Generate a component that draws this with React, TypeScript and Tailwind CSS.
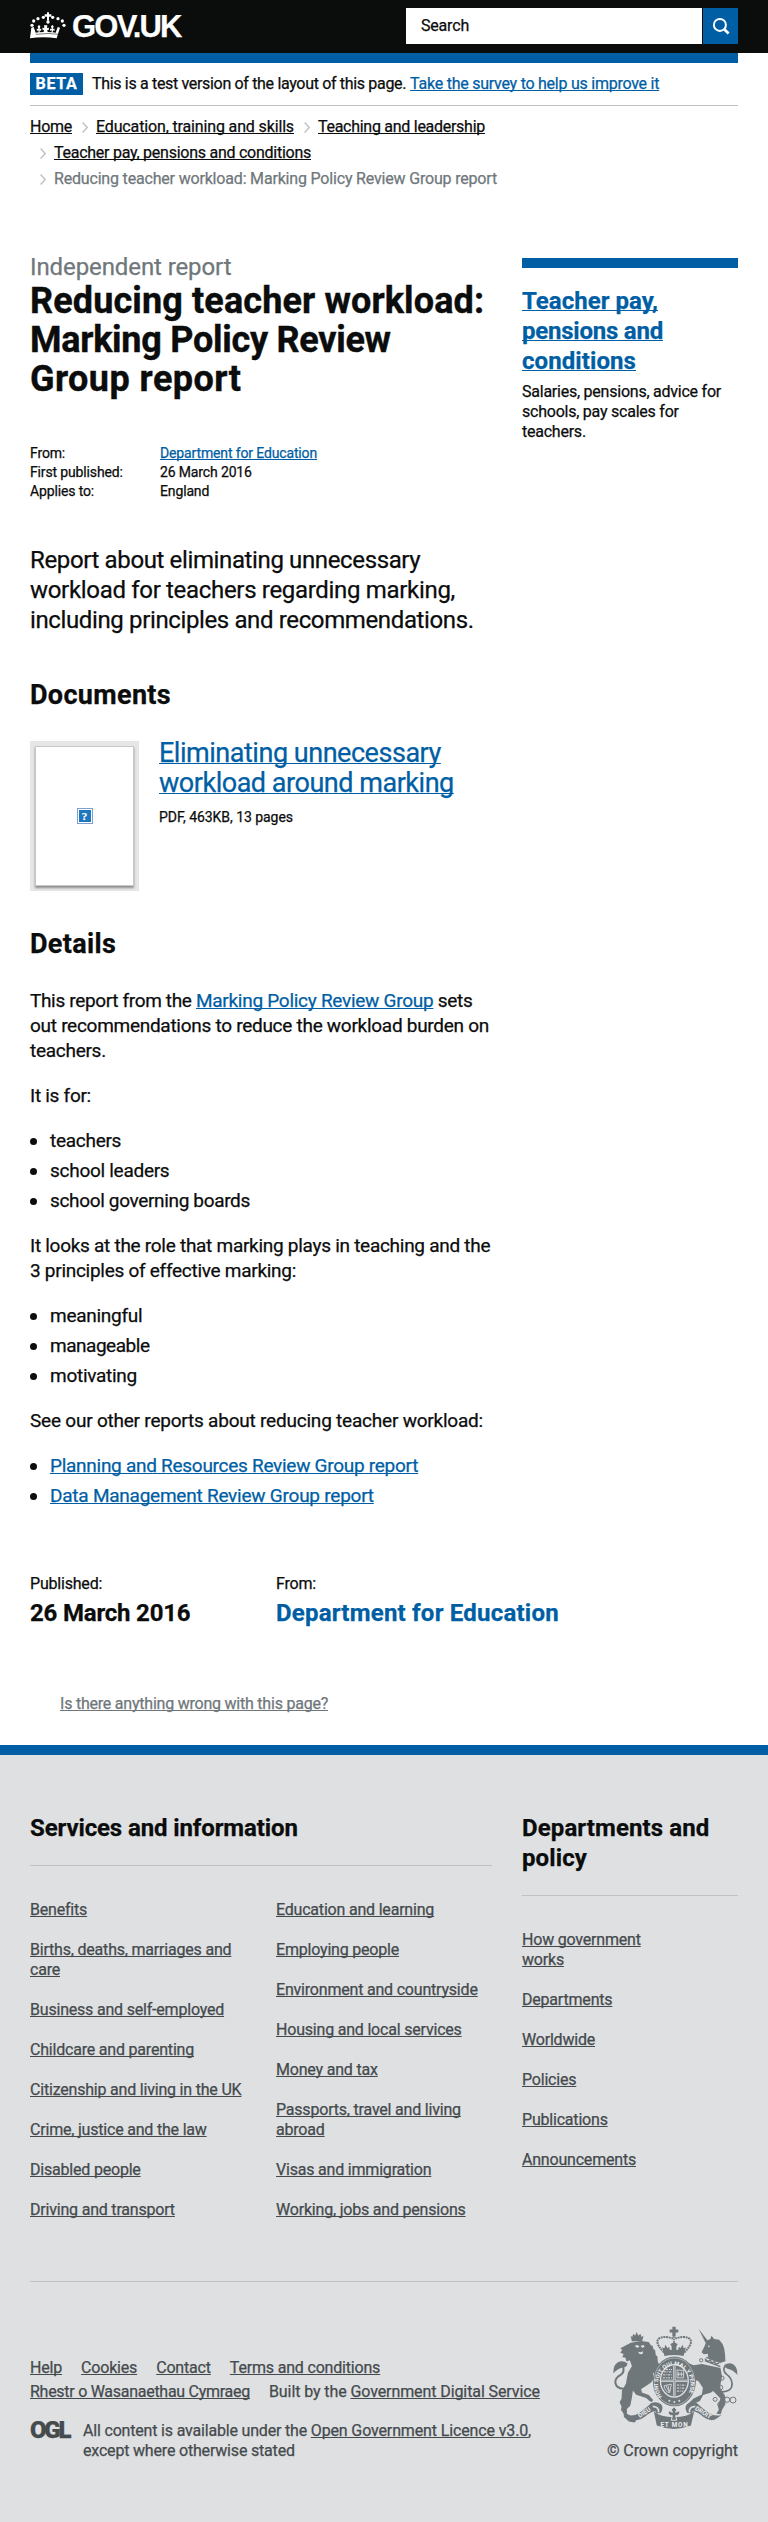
import React from "react";

type Item = { text: string; cls?: string };

const link =
  "underline decoration-1 underline-offset-[1px] [text-decoration-skip-ink:none]";

const services: Item[][] = [
  [
    { text: "Benefits" },
    { text: "Births, deaths, marriages and care" },
    { text: "Business and self-employed" },
    { text: "Childcare and parenting" },
    { text: "Citizenship and living in the UK" },
    { text: "Crime, justice and the law" },
    { text: "Disabled people" },
    { text: "Driving and transport" },
  ],
  [
    { text: "Education and learning" },
    { text: "Employing people" },
    { text: "Environment and countryside" },
    { text: "Housing and local services" },
    { text: "Money and tax" },
    { text: "Passports, travel and living abroad" },
    { text: "Visas and immigration" },
    { text: "Working, jobs and pensions" },
  ],
];

const departments: Item[] = [
  { text: "How government works" },
  { text: "Departments" },
  { text: "Worldwide" },
  { text: "Policies" },
  { text: "Publications" },
  { text: "Announcements" },
];

function Crown() {
  const dots = [
    [130, 52], [114, 56], [101, 63], [96, 76], [158, 52], [174, 56], [187, 63], [192, 76],
  ];
  return (
    <svg width="36" height="27" viewBox="90 36 108 81" fill="#fff" aria-hidden="true">
      <path d="M141 37h6v6h7v7h-7v12h-6V50h-7v-7h7z" />
      <circle cx="144" cy="66" r="5" />
      {dots.map(([x, y]) => (
        <circle key={`${x}-${y}`} cx={x} cy={y} r="4.9" />
      ))}
      <path d="M94 83l7-2 6 17 9-1-1-6-4 2-1-7 5 1-2-8 4-4 4 4-2 8 5-1-1 7-4-2 0 6 12-1 1-7-4 2-1-8 6 1-1-8h10l-1 8 6-1-1 8-4-2 1 7 12 1 0-6-4 2-1-7 5 1-2-8 4-4 4 4-2 8 5-1-1 7-4-2-1 6 9 1 6-17 7 2-10 32q-40-6-80 0z" />
      <path d="M107 103q37-5 74 0" fill="none" stroke="#0b0c0c" strokeWidth="1.6" />
    </svg>
  );
}

function Chevron() {
  return (
    <svg className="mr-2 ml-[10px] mt-px shrink-0" width="6" height="11" viewBox="0 0 6 11" fill="none" aria-hidden="true">
      <path d="M.6.6L5.2 5.5.6 10.4" stroke="#bfc1c3" strokeWidth="1.4" />
    </svg>
  );
}

function Crest() {
  return (
    <svg className="[-webkit-text-stroke:0px]" width="125" height="103" viewBox="68 48 377 310" fill="#6f777b" aria-hidden="true">
      {/* lion */}
      <path d="M121 77l5 4 3-9 6 4 4-10 5 10 7-4 3 9 6-4-4 17h-31z" />
      <path d="M122 98l30-5 24 3 7 11 4-1 3 12 5 2 2 15 5 5 1 15 4 9-2 13 5 16 1 24-8-3-6-18-9-8 3 18-8 12-18 12-12 8 2 10 21 8 13 15-4 6-7-3-10-9-30-10-10-13-3 22-5 24-10 10 0 14 18 10 10 12-6 5-16-3-15-14-1-10-8-12 2-9-6-13 6-12 1-24 12-20 6-33 12-20-6-18-10 4-4-12-9-1 4-10-10-4 6-9-6-4z" />
      <path d="M133 108l8-3 7 4-6 5zM151 108l8-3 5 4-7 5zM143 125l8 2 8-3-2 8-8 1z" fill="#dee0e2" />
      <path d="M108 236q-29 4-33-17-1-15 16-24 13-8 7-26" fill="none" stroke="#6f777b" strokeWidth="6" />
      <path d="M69 190q-1-25 14-33 14-7 29 4-3 12-13 12-15 2-30 17z" />
      {/* unicorn */}
      <path d="M326 56l28 36-7 6z" />
      <path d="M350 93l12-7 3-9 8 10 15 2 10 12 5 13 3 20 1 20-12 4-20-5-20-10-1-12-12 2-7-6 9-18z" />
      <circle cx="357" cy="109" r="2.5" fill="#dee0e2" />
      <path d="M349 142l44 16M345 152l47 18" stroke="#6f777b" strokeWidth="4" />
      <path d="M345 146l9 9 7-5 5 9 8-4 5 8 9-3" fill="none" stroke="#6f777b" strokeWidth="4" />
      <path d="M336 162l56 12 5 26-5 24 0 12 14 22 1 26-10 16-4 14-13-2 7-12-3-12 8-22-22-22-6 4-24 8-10 18-20 9-8 6-9-5 18-18 25-12 3-20-13-20-15-6-8 10-7-12 9-16-7-14-13 5-3-8 13-14 16 7z" />
      <circle cx="334" cy="151" r="5" fill="none" stroke="#6f777b" strokeWidth="3" />
      <path d="M395 246q34 0 32-26-2-16-17-27-13-12-4-25" fill="none" stroke="#6f777b" strokeWidth="5" />
      <path d="M443 195q1-25-14-33-12-5-26 3 3 10 13 12 15 3 27 18z" />
      <g fill="none" stroke="#6f777b" strokeWidth="3">
        <circle cx="397" cy="205" r="6" />
        <circle cx="392" cy="233" r="7" />
        <circle cx="376" cy="269" r="6" />
        <circle cx="391" cy="284" r="7" />
        <circle cx="412" cy="270" r="8" />
        <circle cx="430" cy="271" r="9" />
      </g>
      {/* central crown */}
      <path d="M247 50h10v8h8v9h-8v12h-10V67h-8v-9h8z" />
      <path d="M222 128c-12-15-24-26-19-38 8-15 39-8 46-4M283 128c12-15 24-26 19-38-8-15-39-8-46-4" fill="none" stroke="#6f777b" strokeWidth="6" strokeDasharray="6 2" />
      <path d="M252 79v46" stroke="#6f777b" strokeWidth="5" strokeDasharray="5 2" />
      <path d="M220 124l-4-12 7 3 3-11 6 10 6-3 1 8 6 1 0-10-4-8 11-5 11 5-4 8 0 10 6-1 1-8 6 3 6-10 3 11 7-3-4 12-3 14q-29-6-58 0z" />
      {/* garter and shield */}
      <ellipse cx="253" cy="215" rx="65" ry="75" />
      <ellipse cx="253" cy="215" rx="61" ry="71" fill="none" stroke="#dee0e2" strokeWidth="1.5" />
      <ellipse cx="253" cy="213" rx="44" ry="51" fill="#dee0e2" />
      <ellipse cx="253" cy="213" rx="40" ry="47" />
      <path id="garter" d="M216 261A49 57 0 1 1 290 261" fill="none" />
      <text fill="#eef0f1" fontSize="17" fontWeight="700" fontFamily="Roboto, sans-serif">
        <textPath href="#garter" textLength="232">HONI SOIT QUI MAL Y PENSE</textPath>
      </text>
      <path d="M253 166v94M213 213h80" stroke="#dee0e2" strokeWidth="7" />
      <path d="M253 166v94M213 213h80" stroke="#6f777b" strokeWidth="2" />
      <g fill="none" stroke="#dee0e2" strokeWidth="3" strokeDasharray="7 3 3 2">
        <path d="M222 186h24M219 195h27M218 204h28M227 179h19" />
        <path d="M261 226h26M261 235h24M261 244h19" />
      </g>
      <path d="M261 180l20 2v22h-20zM266 186v14M274 186v14M261 193h20" fill="none" stroke="#dee0e2" strokeWidth="2.5" />
      <path d="M222 228l22-5-5 26q-15-3-17-21zM228 228l9 18M234 227l4 18" fill="none" stroke="#dee0e2" strokeWidth="2.5" />
      <g fill="#dee0e2">
        <circle cx="238" cy="273" r="3" />
        <circle cx="253" cy="277" r="3" />
        <circle cx="268" cy="273" r="3" />
      </g>
      {/* motto ribbons */}
      <path d="M108 315q20 8 40-6 25-18 35-29 18-6 30 4 10 12-2 27-8-2-10 2l-6-9q-15 3-32 18-22 17-41 4z" />
      <path d="M396 315q-20 8-40-6-25-18-35-29-18-6-30 4-10 12 2 27 8-2 10 2l6-9q15 3 32 18 22 17 41 4z" />
      <path d="M191 305q20 18 61 18t61-18l-10 43q-51 20-103 0z" />
      <path d="M188 290q20 2 17 18M316 290q-20 2-17 18" fill="none" stroke="#dee0e2" strokeWidth="5" />
      <path d="M252 291l8 9-3 8 10-5 3 8-8 7h-5l3 14h-16l3-14h-5l-8-7 3-8 10 5-3-8z" stroke="#dee0e2" strokeWidth="3" />
      <g fill="#eef0f1" fontSize="19" fontWeight="700" fontFamily="Roboto, sans-serif" textAnchor="middle">
        <text transform="translate(166 314) rotate(-33)">DIEU</text>
        <text x="252" y="351" textLength="82">ET MON</text>
        <text transform="translate(337 314) rotate(33)">DROIT</text>
      </g>
    </svg>
  );
}

function Bullets({ children }: { children: React.ReactNode }) {
  return <ul className="mt-5 flex flex-col gap-[5px]">{children}</ul>;
}

function Bullet({ children }: { children: React.ReactNode }) {
  return (
    <li className="flex items-center">
      <span className="mt-px mr-[13px] h-[7px] w-[7px] rounded-full bg-[#0b0c0c]" />
      {children}
    </li>
  );
}

function FooterLinks({ items, width }: { items: Item[]; width: string }) {
  return (
    <ul className={`flex flex-col gap-5 text-base leading-5 tracking-[-0.0125em] text-[#454a4d] ${width}`}>
      {items.map((i) => (
        <li key={i.text}>
          <a className={link}>{i.text}</a>
        </li>
      ))}
    </ul>
  );
}

export default function App() {
  return (
    <div className="w-[768px] bg-white font-['Roboto',sans-serif] text-[#0b0c0c] [-webkit-text-stroke:0.25px]">
      <header className="flex h-[53px] items-start justify-between bg-[#0b0c0c] px-[30px]">
        <a className="flex pt-3">
          <Crown />
          <span className="ml-[6px] font-['Liberation_Sans',sans-serif] text-[31px] leading-[29px] font-bold tracking-[-1.8px] text-white">
            GOV.UK
          </span>
        </a>
        <div className="mt-2 flex h-9 gap-px">
          <div className="flex w-[296px] items-center bg-white pl-[15px] text-base tracking-[-0.012em]">Search</div>
          <button className="flex w-[35px] items-center justify-center bg-[#005ea5]" aria-label="Search">
            <svg width="18" height="18" viewBox="0 0 18 18" fill="none" stroke="#fff">
              <circle cx="7.9" cy="7.9" r="6" strokeWidth="2" />
              <path d="M12.2 12.2l4.4 4.2" strokeWidth="2.8" />
            </svg>
          </button>
        </div>
      </header>

      <div className="mx-[30px]">
        <div className="h-[10px] bg-[#005ea5]" />
        <div className="flex h-[43px] items-center border-b border-[#bfc1c3] text-base leading-5">
          <strong className="mr-[9px] flex h-[22px] w-[53px] items-center justify-center bg-[#005ea5] pb-px tracking-[0.04em] text-white">
            BETA
          </strong>
          <span className="tracking-[-0.0205em]">This is a test version of the layout of this page.</span>
          <a className={`ml-1 tracking-[-0.0155em] text-[#005ea5] ${link}`}>Take the survey to help us improve it</a>
        </div>
        <nav className="flex h-[86px] flex-col pt-2 text-base leading-[26px]">
          <div className="flex items-center">
            <a className={`tracking-[-0.0165em] ${link}`}>Home</a>
            <Chevron />
            <a className={`tracking-[-0.0091em] ${link}`}>Education, training and skills</a>
            <Chevron />
            <a className={`tracking-[-0.0172em] ${link}`}>Teaching and leadership</a>
          </div>
          <div className="flex items-center">
            <Chevron />
            <a className={`tracking-[-0.016em] ${link}`}>Teacher pay, pensions and conditions</a>
          </div>
          <div className="flex items-center text-[#6f777b]">
            <Chevron />
            <span className="tracking-[-0.0113em]">Reducing teacher workload: Marking Policy Review Group report</span>
          </div>
        </nav>

        <div className="flex justify-between">
          <main className="w-[462px] pt-[60px]">
            <p className="text-2xl leading-[30px] tracking-[-0.004em] text-[#6f777b]">Independent report</p>
            <h1 className="text-[36px] leading-[39px] font-bold [-webkit-text-stroke:0.4px]">
              <span className="tracking-[0.0035em]">Reducing teacher workload:</span>
              <br />
              <span className="tracking-[-0.0076em]">Marking Policy Review</span>
              <br />
              <span className="tracking-[0.0127em]">Group report</span>
            </h1>
            <dl className="mt-[45px] grid grid-cols-[130px_1fr] text-sm leading-[19px] tracking-[-0.01em]">
              <dt>From:</dt>
              <dd><a className={`text-[#005ea5] ${link}`}>Department for Education</a></dd>
              <dt>First published:</dt>
              <dd>26 March 2016</dd>
              <dt>Applies to:</dt>
              <dd>England</dd>
            </dl>
            <p className="mt-[44px] text-2xl leading-[30px] tracking-[-0.0155em]">
              Report about eliminating unnecessary
              <br />
              <span className="tracking-[-0.0132em]">workload for teachers regarding marking,</span>
              <br />
              including principles and recommendations.
            </p>
            <h2 className="mt-[45px] text-[27px] leading-[30px] font-bold tracking-[0.012em]">Documents</h2>
            <section className="mt-7 flex h-[153px]">
              <div className="mt-2 ml-[5px] flex h-[140px] w-[99px] items-center justify-center border border-[#c6c7c7] bg-white shadow-[0_2px_2px_rgba(11,12,12,0.4)] outline-[5px] outline-[rgba(11,12,12,0.1)]">
                <div className="flex h-4 w-4 border border-[#7f9fd0] bg-white p-px">
                  <div className="flex flex-1 items-center justify-center bg-[#1f78bd] font-['Liberation_Serif',serif] text-[11px] leading-none font-bold text-white">
                    ?
                  </div>
                </div>
              </div>
              <div className="ml-[25px] pt-px">
                <h3 className="text-[27px] leading-[29.5px] tracking-[-0.0175em] text-[#005ea5]">
                  <a className={link}>
                    Eliminating unnecessary
                    <br />
                    workload around marking
                  </a>
                </h3>
                <p className="mt-[9px] text-sm leading-5 tracking-[-0.0033em]">PDF, 463KB, 13 pages</p>
              </div>
            </section>
            <h2 className="mt-[38px] text-[27px] leading-[30px] font-bold tracking-[0.012em]">Details</h2>
            <div className="mt-[29px] text-[19px] leading-[25px] tracking-[-0.0146em]">
              <p>
                <span className="tracking-[-0.018em]">This report from the </span>
                <a className={`text-[#005ea5] ${link}`}>Marking Policy Review Group</a> sets
                <br />
                out recommendations to reduce the workload burden on
                <br />
                teachers.
              </p>
              <p className="mt-5">It is for:</p>
              <Bullets>
                <Bullet>teachers</Bullet>
                <Bullet>school leaders</Bullet>
                <Bullet><span className="tracking-[-0.018em]">school governing boards</span></Bullet>
              </Bullets>
              <p className="mt-5">
                It looks at the role that marking plays in teaching and the
                <br />3 principles of effective marking:
              </p>
              <Bullets>
                <Bullet>meaningful</Bullet>
                <Bullet><span className="tracking-[-0.025em]">manageable</span></Bullet>
                <Bullet>motivating</Bullet>
              </Bullets>
              <p className="mt-5 tracking-[-0.0113em]">See our other reports about reducing teacher workload:</p>
              <Bullets>
                <Bullet><a className={`text-[#005ea5] ${link}`}>Planning and Resources Review Group report</a></Bullet>
                <Bullet><a className={`tracking-[-0.0125em] text-[#005ea5] ${link}`}>Data Management Review Group report</a></Bullet>
              </Bullets>
            </div>
          </main>

          <aside className="w-[216px] pt-[66px]">
            <div className="border-t-[10px] border-[#005ea5] pt-[18px]">
              <h2 className="text-2xl leading-[30px] font-bold text-[#005ea5]">
                <a className={link}>
                  <span className="tracking-[0.0011em]">Teacher pay,</span>
                  <br />
                  <span className="tracking-[-0.0094em]">pensions and</span>
                  <br />
                  <span className="tracking-[0.0035em]">conditions</span>
                </a>
              </h2>
              <p className="mt-[6px] text-base leading-5 tracking-[-0.0147em]">
                Salaries, pensions, advice for
                <br />
                schools, pay scales for
                <br />
                teachers.
              </p>
            </div>
          </aside>
        </div>

        <div className="mt-[66px] grid grid-cols-[246px_1fr] text-base leading-5 tracking-[-0.0125em]">
          <div>
            <p>Published:</p>
            <p className="mt-1 text-2xl leading-[30px] font-bold tracking-[-0.008em]">26 March 2016</p>
          </div>
          <div>
            <p>From:</p>
            <p className="mt-1 text-2xl leading-[30px] font-bold tracking-[0.009em] text-[#005ea5]">Department for Education</p>
          </div>
        </div>
        <p className="mt-[66px] ml-[30px] h-[51px] text-base leading-5 tracking-[-0.0139em] text-[#6f777b]">
          <a className={link}>Is there anything wrong with this page?</a>
        </p>
      </div>

      <footer className="h-[777px] border-t-[10px] border-[#005ea5] bg-[#dee0e2] px-[30px] pt-[58px]">
        <div className="flex h-[469px] justify-between border-b border-[#bfc1c3]">
          <section className="w-[462px]">
            <h2 className="border-b border-[#bfc1c3] pb-[22px] text-2xl leading-[30px] font-bold tracking-[-0.005em]">
              Services and information
            </h2>
            <div className="mt-[34px] flex gap-[30px]">
              <FooterLinks items={services[0]} width="w-[216px]" />
              <FooterLinks items={services[1]} width="w-[216px]" />
            </div>
          </section>
          <section className="w-[216px]">
            <h2 className="mb-[34px] border-b border-[#bfc1c3] pb-[22px] text-2xl leading-[30px] font-bold tracking-[0.0045em]">
              Departments and
              <br />
              policy
            </h2>
            <FooterLinks items={departments} width="w-[140px]" />
          </section>
        </div>
        <div className="flex justify-between pt-[44px] text-base text-[#454a4d]">
          <div className="pt-[30px]">
            <div className="flex leading-6 tracking-[-0.0115em]">
              <a className={`mr-[19px] ${link}`}>Help</a>
              <a className={`mr-[19px] ${link}`}>Cookies</a>
              <a className={`mr-[19px] ${link}`}>Contact</a>
              <a className={link}>Terms and conditions</a>
            </div>
            <div className="flex leading-6 tracking-[-0.006em]">
              <a className={`mr-[19px] tracking-[-0.017em] ${link}`}>Rhestr o Wasanaethau Cymraeg</a>
              <span>
                Built by the <a className={link}>Government Digital Service</a>
              </span>
            </div>
            <div className="mt-[17px] flex leading-5 tracking-[-0.0115em]">
              <span className="w-[53px] text-[24px] leading-[18px] font-black tracking-[-2.2px]">OGL</span>
              <p>
                All content is available under the{" "}
                <a className={`tracking-[-0.0085em] ${link}`}>Open Government Licence v3.0</a>,
                <br />
                except where otherwise stated
              </p>
            </div>
          </div>
          <div className="flex flex-col items-end">
            <Crest />
            <p className="mt-3 leading-5 tracking-[-0.0055em]">© Crown copyright</p>
          </div>
        </div>
      </footer>
    </div>
  );
}
